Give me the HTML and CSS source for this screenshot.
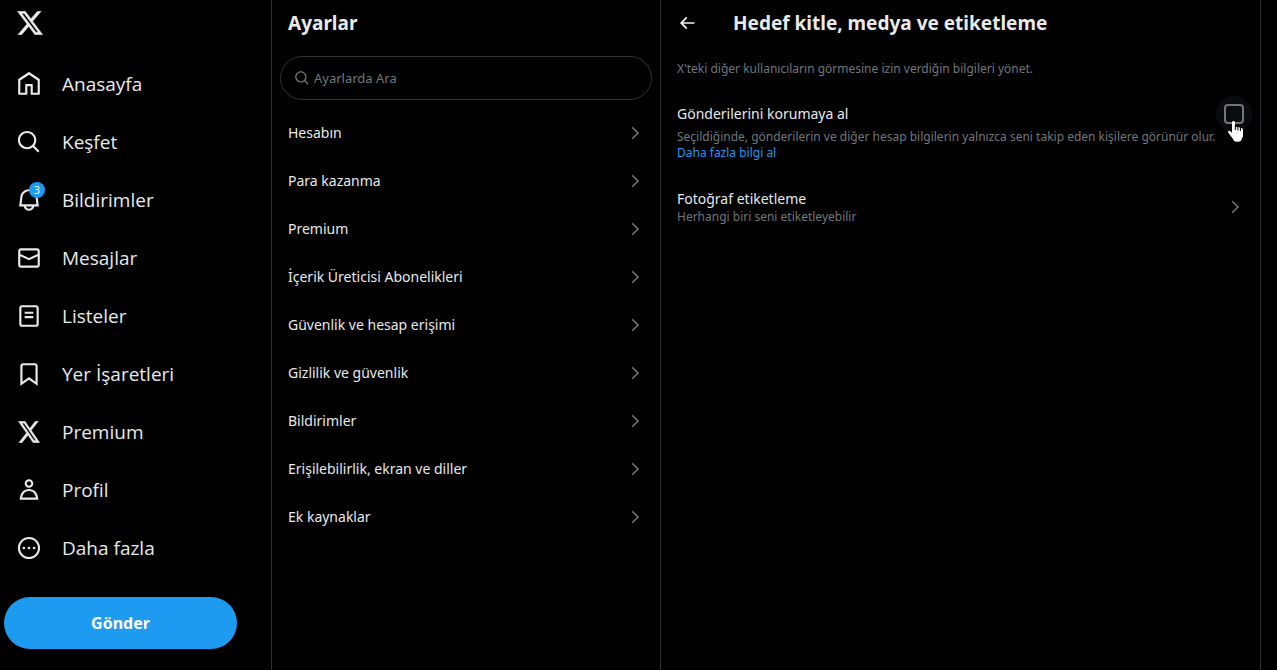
FILE: index.html
```html
<!DOCTYPE html>
<html lang="tr">

<head>
    <meta charset="UTF-8">
    <meta name="viewport" content="width=device-width, initial-scale=1.0">
    <title>Hedef kitle, medya ve etiketleme / X</title>
    <link rel="stylesheet" href="styles.css">
</head>

<body>
    <!-- Shared icons -->
    <svg class="sprite" aria-hidden="true">
        <symbol id="icon-x" viewBox="1 2 22 20" preserveAspectRatio="none">
            <path stroke="currentColor" stroke-width=".3" d="M18.244 2.250h3.308l-7.227 8.260 8.502 11.240H16.170l-5.214-6.817L4.990 21.750H1.680l7.730-8.835L1.254 2.250H8.080l4.713 6.231zm-1.161 17.520h1.833L7.084 4.126H5.117z"/>
        </symbol>
        <symbol id="icon-search" viewBox="0 0 24 24">
            <path d="M10.25 3.75c-3.59 0-6.5 2.91-6.5 6.5s2.91 6.5 6.5 6.5c1.795 0 3.419-.726 4.596-1.904 1.178-1.177 1.904-2.801 1.904-4.596 0-3.59-2.91-6.5-6.5-6.5zm-8.5 6.5c0-4.694 3.806-8.5 8.5-8.5s8.5 3.806 8.5 8.5c0 1.986-.682 3.815-1.824 5.262l4.781 4.781-1.414 1.414-4.781-4.781c-1.447 1.142-3.276 1.824-5.262 1.824-4.694 0-8.5-3.806-8.5-8.5z"/>
        </symbol>
        <symbol id="icon-chevron" viewBox="0 0 24 24">
            <path d="M14.586 12L7.543 4.96l1.414-1.42L17.414 12l-8.457 8.46-1.414-1.42L14.586 12z"/>
        </symbol>
    </svg>

    <div class="layout">
        <header class="sidebar">
            <a class="logo" href="#" aria-label="X"><svg><use href="#icon-x"/></svg></a>

            <nav class="main-nav">
                <a href="#">
                    <span class="nav-icon"><svg viewBox="0 0 24 24"><path d="M21.591 7.146L12.52 1.157c-.316-.21-.724-.21-1.04 0l-9.071 5.99c-.26.173-.409.456-.409.757v13.183c0 .502.418.913.929.913h6.638c.511 0 .929-.41.929-.913v-7.075h3.008v7.075c0 .502.418.913.929.913h6.639c.51 0 .928-.41.928-.913V7.904c0-.301-.158-.584-.408-.758zM20 20l-4.5.01.011-7.097c0-.502-.418-.913-.928-.913H9.44c-.511 0-.929.41-.929.913L8.5 20H4V8.773l8.011-5.342L20 8.764z"/></svg></span>
                    <span>Anasayfa</span>
                </a>
                <a href="#">
                    <span class="nav-icon"><svg><use href="#icon-search"/></svg></span>
                    <span>Keşfet</span>
                </a>
                <a href="#">
                    <span class="nav-icon"><svg viewBox="0 0 24 24"><path d="M19.993 9.042C19.48 5.017 16.054 2 11.996 2s-7.49 3.021-7.999 7.051L2.866 18H7.1c.463 2.282 2.481 4 4.9 4s4.437-1.718 4.9-4h4.236l-1.143-8.958zM12 20c-1.306 0-2.417-.835-2.829-2h5.658c-.412 1.165-1.523 2-2.829 2zm-6.866-4l.847-6.698C6.364 6.272 8.941 4 11.996 4s5.627 2.268 6.013 5.295L18.864 16H5.134z"/></svg><span class="badge">3</span></span>
                    <span>Bildirimler</span>
                </a>
                <a href="#">
                    <span class="nav-icon"><svg viewBox="0 0 24 24"><path d="M1.998 5.5c0-1.381 1.119-2.5 2.5-2.5h15c1.381 0 2.5 1.119 2.5 2.5v13c0 1.381-1.119 2.5-2.5 2.5h-15c-1.381 0-2.5-1.119-2.5-2.5v-13zm2.5-.5c-.276 0-.5.224-.5.5v2.764l8 3.638 8-3.636V5.5c0-.276-.224-.5-.5-.5h-15zm15.5 5.463l-8 3.636-8-3.638V18.5c0 .276.224.5.5.5h15c.276 0 .5-.224.5-.5v-8.037z"/></svg></span>
                    <span>Mesajlar</span>
                </a>
                <a href="#">
                    <span class="nav-icon"><svg viewBox="0 0 24 24"><path d="M3 4.5C3 3.12 4.12 2 5.5 2h13C19.88 2 21 3.12 21 4.5v15c0 1.38-1.12 2.5-2.5 2.5h-13C4.12 22 3 20.88 3 19.5v-15zM5.5 4c-.28 0-.5.22-.5.5v15c0 .28.22.5.5.5h13c.28 0 .5-.22.5-.5v-15c0-.28-.22-.5-.5-.5h-13zM16 10H8V8h8v2zm-8 2h8v2H8v-2z"/></svg></span>
                    <span>Listeler</span>
                </a>
                <a href="#">
                    <span class="nav-icon"><svg viewBox="0 0 24 24"><path d="M4 4.5C4 3.12 5.119 2 6.5 2h11C18.881 2 20 3.12 20 4.5v18.44l-8-5.71-8 5.71V4.5zM6.5 4c-.276 0-.5.22-.5.5v14.56l6-4.29 6 4.29V4.5c0-.28-.224-.5-.5-.5h-11z"/></svg></span>
                    <span>Yer İşaretleri</span>
                </a>
                <a href="#">
                    <span class="nav-icon small-x"><svg><use href="#icon-x"/></svg></span>
                    <span>Premium</span>
                </a>
                <a href="#">
                    <span class="nav-icon"><svg viewBox="0 0 24 24"><path d="M5.651 19h12.698c-.337-1.8-1.023-3.21-1.945-4.19C15.318 13.65 13.838 13 12 13s-3.317.65-4.404 1.81c-.922.98-1.608 2.39-1.945 4.19zm.486-5.56C7.627 11.85 9.648 11 12 11s4.373.85 5.863 2.44c1.477 1.58 2.366 3.8 2.632 6.46l.11 1.1H3.395l.11-1.1c.266-2.66 1.155-4.88 2.632-6.46zM12 4c-1.105 0-2 .9-2 2s.895 2 2 2 2-.9 2-2-.895-2-2-2zM8 6c0-2.21 1.791-4 4-4s4 1.79 4 4-1.791 4-4 4-4-1.79-4-4z"/></svg></span>
                    <span>Profil</span>
                </a>
                <a href="#">
                    <span class="nav-icon"><svg viewBox="0 0 24 24"><path d="M3.75 12c0-4.56 3.69-8.25 8.25-8.25s8.25 3.69 8.25 8.25-3.69 8.25-8.25 8.25S3.75 16.56 3.75 12zM12 1.75C6.34 1.75 1.75 6.34 1.75 12S6.34 22.25 12 22.25 22.25 17.66 22.25 12 17.66 1.75 12 1.75z"/><circle cx="7.25" cy="12" r="1.25"/><circle cx="12" cy="12" r="1.25"/><circle cx="16.75" cy="12" r="1.25"/></svg></span>
                    <span>Daha fazla</span>
                </a>
            </nav>

            <button class="post-btn" type="button">Gönder</button>
        </header>

        <section class="settings">
            <h2>Ayarlar</h2>

            <form class="search">
                <label for="settings-search" aria-label="Ayarlarda Ara"><svg><use href="#icon-search"/></svg></label>
                <input type="text" id="settings-search" placeholder="Ayarlarda Ara">
            </form>

            <nav class="settings-nav">
                <a href="#"><span>Hesabın</span><svg class="chevron"><use href="#icon-chevron"/></svg></a>
                <a href="#"><span>Para kazanma</span><svg class="chevron"><use href="#icon-chevron"/></svg></a>
                <a href="#"><span>Premium</span><svg class="chevron"><use href="#icon-chevron"/></svg></a>
                <a href="#"><span>İçerik Üreticisi Abonelikleri</span><svg class="chevron"><use href="#icon-chevron"/></svg></a>
                <a href="#"><span>Güvenlik ve hesap erişimi</span><svg class="chevron"><use href="#icon-chevron"/></svg></a>
                <a href="#"><span>Gizlilik ve güvenlik</span><svg class="chevron"><use href="#icon-chevron"/></svg></a>
                <a href="#"><span>Bildirimler</span><svg class="chevron"><use href="#icon-chevron"/></svg></a>
                <a href="#"><span>Erişilebilirlik, ekran ve diller</span><svg class="chevron"><use href="#icon-chevron"/></svg></a>
                <a href="#"><span>Ek kaynaklar</span><svg class="chevron"><use href="#icon-chevron"/></svg></a>
            </nav>
        </section>

        <main class="detail">
            <div class="detail-header">
                <button class="back-btn" type="button" aria-label="Geri"><svg viewBox="0 0 24 24"><path d="M7.414 13l5.043 5.04-1.414 1.42L3.586 12l7.457-7.46 1.414 1.42L7.414 11H21v2H7.414z"/></svg></button>
                <h2>Hedef kitle, medya ve etiketleme</h2>
            </div>

            <p class="intro">X'teki diğer kullanıcıların görmesine izin verdiğin bilgileri yönet.</p>

            <div class="protect">
                <div class="protect-row">
                    <label for="protect">Gönderilerini korumaya al</label>
                    <span class="check">
                        <input type="checkbox" id="protect">
                        <svg class="cursor" viewBox="0 0 18 23"><path d="M5 2.500C5 .5 8 .5 8 2.500V8c0-1.500 2.600-1.500 2.600.3 0-1.500 2.600-1.300 2.600.5 0-1.300 2.800-1.200 2.800.8v5.900c0 1.500-1 2.800-1.500 4.300-1 2.700-7 2.700-8.200 0C5.500 17.500 3 15.500 1.200 12.500c-.9-1.600 1-2.500 2.100-1.300L5 12.800z"/><path class="fingers" d="M8.300 5.500V10M10.900 7.500V10.500M13.400 8V11"/></svg>
                    </span>
                </div>
                <p>Seçildiğinde, gönderilerin ve diğer hesap bilgilerin yalnızca seni takip eden kişilere görünür olur. <a href="#">Daha fazla bilgi al</a></p>
            </div>

            <a class="tagging" href="#">
                <span>
                    <strong>Fotoğraf etiketleme</strong>
                    <small>Herhangi biri seni etiketleyebilir</small>
                </span>
                <svg class="chevron"><use href="#icon-chevron"/></svg>
            </a>
        </main>
    </div>
</body>
</html>
```
FILE: styles.css
```css
* {
    box-sizing: border-box;
}

body {
    margin: 0;
    background-color: #000;
    color: #e7e9ea;
    font-family: "Noto Sans", "Open Sans", sans-serif;
    font-size: 14px;
    line-height: 20px;
}

a {
    color: inherit;
    text-decoration: none;
}

h2, p {
    margin: 0;
}

h2 {
    font-size: 19px;
    line-height: 24px;
    font-weight: 700;
}

svg {
    display: block;
    fill: currentColor;
}

button {
    font-family: inherit;
    border: none;
    cursor: pointer;
}

.sprite {
    display: none;
}

.layout {
    display: grid;
    grid-template-columns: 272px 389px minmax(0, 1fr);
    min-height: 100vh;
    padding-right: 16px;
}

.sidebar,
.settings,
.detail {
    border-right: 1px solid #2f3336;
}

/* Left navigation */
.logo {
    display: block;
    padding: 11px 17px 0;
    height: 55px;
}

.logo svg {
    width: 26px;
    height: 24px;
}

.main-nav a {
    display: flex;
    align-items: center;
    gap: 20px;
    height: 58px;
    padding-left: 16px;
    font-family: "Open Sans", "Noto Sans", sans-serif;
    font-size: 19px;
}

.nav-icon {
    position: relative;
}

.nav-icon svg {
    width: 26px;
    height: 26px;
}

.nav-icon.small-x svg {
    padding: 2px;
}

.badge {
    position: absolute;
    top: -5px;
    right: -3px;
    width: 16px;
    height: 16px;
    border-radius: 50%;
    background-color: #1d9bf0;
    color: #fff;
    font-size: 11px;
    line-height: 16px;
    text-align: center;
}

.post-btn {
    width: 233px;
    height: 52px;
    margin: 20px 4px;
    border-radius: 26px;
    background-color: #1d9bf0;
    color: #fff;
    font-size: 16px;
    font-weight: 700;
}

/* Settings list */
.settings h2 {
    padding: 11px 16px 21px;
}

.search {
    display: flex;
    align-items: center;
    gap: 2px;
    height: 44px;
    margin: 0 8px 9px;
    padding: 0 13px;
    border: 1px solid #2f3336;
    border-radius: 22px;
    color: #71767b;
}

.search svg {
    width: 16px;
    height: 16px;
}

.search input {
    flex: 1;
    min-width: 0;
    border: none;
    outline: none;
    background: none;
    color: #e7e9ea;
    font: inherit;
    font-size: 13px;
}

.search input::placeholder {
    color: #71767b;
}

.settings-nav a {
    display: flex;
    align-items: center;
    justify-content: space-between;
    height: 48px;
    padding: 0 16px;
}

.chevron {
    width: 18px;
    height: 18px;
    color: #71767b;
}

/* Detail column */
.detail-header {
    display: flex;
    align-items: center;
    gap: 36px;
    padding: 11px 16px;
}

.back-btn {
    padding: 0;
    background: none;
    color: #eff3f4;
}

.back-btn svg {
    width: 20px;
    height: 20px;
}

.intro {
    padding: 15px 16px 14px;
    color: #71767b;
    font-size: 12px;
    line-height: 16px;
}

.protect {
    padding: 8px 16px 14px;
}

.protect-row {
    display: flex;
    align-items: center;
    justify-content: space-between;
    height: 30px;
}

.protect p {
    color: #71767b;
    font-size: 12px;
    line-height: 16px;
}

.protect p a {
    color: #1d9bf0;
}

.check {
    position: relative;
    padding: 8px;
    margin-right: -8px;
    border-radius: 50%;
    background-color: #0a0b0c;
}

.check input {
    appearance: none;
    display: block;
    width: 20px;
    height: 20px;
    margin: 0;
    border: 2px solid #71767b;
    border-radius: 4px;
    cursor: pointer;
}

.cursor {
    position: absolute;
    top: 24px;
    left: 11px;
    width: 18px;
    height: 23px;
    color: #fff;
}

.cursor .fingers {
    fill: none;
    stroke: #000;
    stroke-width: 1px;
}

.tagging {
    display: flex;
    align-items: center;
    justify-content: space-between;
    padding: 14px 16px;
}

.tagging strong,
.tagging small {
    display: block;
}

.tagging strong {
    font-weight: 400;
}

.tagging small {
    color: #71767b;
    font-size: 12px;
    line-height: 16px;
}
```
